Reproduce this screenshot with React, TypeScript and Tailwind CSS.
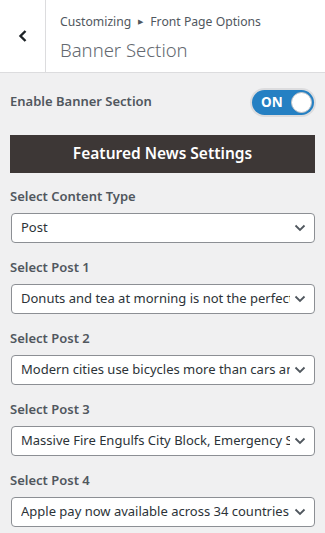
import React from "react";

const font = { fontFamily: '"Noto Sans", "Open Sans", sans-serif' };

function Chevron() {
  return (
    <svg width="12" height="8" viewBox="0 0 12 8" className="shrink-0">
      <polyline points="1.5,1.5 6,6 10.5,1.5" fill="none" stroke="#50575e" strokeWidth="1.8" />
    </svg>
  );
}

function SelectBox({ value }: { value: string }) {
  return (
    <div className="ml-px flex h-[30px] items-center rounded-[4px] border border-[#8c8f94] bg-white pl-[9px] pr-[8px]">
      <span className="min-w-0 flex-1 overflow-hidden whitespace-nowrap text-[13px] text-[#2c3338]">{value}</span>
      <span className="ml-[4px]">
        <Chevron />
      </span>
    </div>
  );
}

function Group({ label, value }: { label: string; value: string }) {
  return (
    <div className="mb-[15px]">
      <div className="mb-[6px] flex h-5 items-center text-[13px] font-semibold text-[#50575e]">{label}</div>
      <SelectBox value={value} />
    </div>
  );
}

export default function App() {
  return (
    <div className="h-[533px] w-[325px] overflow-hidden bg-[#f0f0f1]" style={font}>
      <div className="flex h-[73px] border-b border-[#dcdcde] bg-white">
        <div className="flex w-[46px] items-center justify-center border-r border-[#dcdcde]">
          <svg width="12" height="14" viewBox="0 0 12 14">
            <polyline points="8.5,2 3.5,7 8.5,12" fill="none" stroke="#1d2327" strokeWidth="2.4" />
          </svg>
        </div>
        <div className="flex flex-col pl-[14px] pt-[12px]">
          <div className="flex h-5 items-center text-[12.2px] text-[#50575e]">
            <span>Customizing</span>
            <span className="mx-[7px] text-[7px]">▶</span>
            <span>Front Page Options</span>
          </div>
          <div className="mt-[4px] text-[18.5px] font-light leading-[28px] text-[#646970]">Banner Section</div>
        </div>
      </div>
      <div className="px-[10px]">
        <div className="mt-[17px] flex h-6 items-center justify-between">
          <span className="text-[13px] font-semibold text-[#50575e]">Enable Banner Section</span>
          <div className="mr-[1px] flex h-[25px] w-[62px] items-center justify-between rounded-full bg-[#2580c3] pl-[9px] pr-[2px] shadow-[0_0_0_2px_#dcdcde]">
            <span className="text-[13.5px] font-bold text-white">ON</span>
            <span className="h-[21px] w-[21px] rounded-full border border-[#c3c4c7] bg-white" />
          </div>
        </div>
        <div className="mt-[21px] flex h-[38px] items-center justify-center bg-[#3d3736] text-[15.5px] font-semibold text-white">
          Featured News Settings
        </div>
        <div className="mt-[14px]">
          <Group label="Select Content Type" value="Post" />
          <Group label="Select Post 1" value="Donuts and tea at morning is not the perfect combination" />
          <Group label="Select Post 2" value="Modern cities use bicycles more than cars and buses" />
          <Group label="Select Post 3" value="Massive Fire Engulfs City Block, Emergency Services Respond" />
          <Group label="Select Post 4" value="Apple pay now available across 34 countries" />
        </div>
      </div>
    </div>
  );
}
